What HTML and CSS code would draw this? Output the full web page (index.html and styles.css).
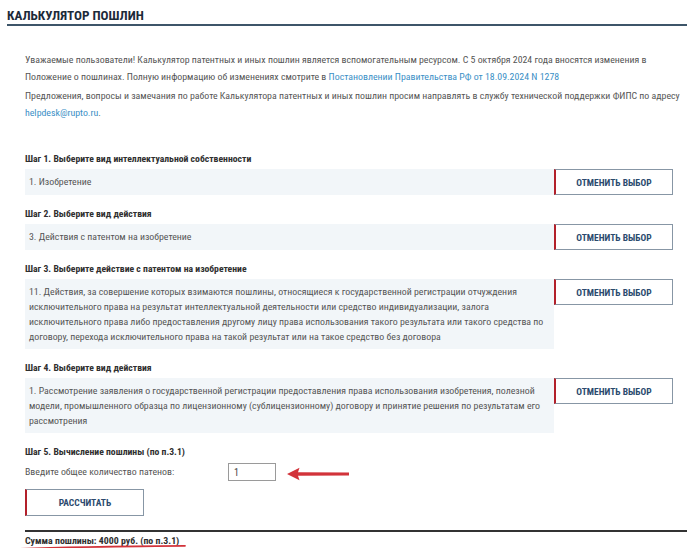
FILE: index.html
```html
<!DOCTYPE html>
<html lang="ru">
<head>
<meta charset="utf-8">
<title>Калькулятор пошлин</title>
<link rel="stylesheet" href="styles.css">
</head>
<body>
<div class="page">
  <h1 class="title">КАЛЬКУЛЯТОР ПОШЛИН</h1>
  <div class="content">
    <p class="intro first">Уважаемые пользователи! Калькулятор патентных и иных пошлин является вспомогательным ресурсом. С 5 октября 2024 года вносятся изменения в<br>Положение о пошлинах. Полную информацию об изменениях смотрите в <a href="#">Постановлении Правительства РФ от 18.09.2024 N 1278</a></p>
    <p class="intro">Предложения, вопросы и замечания по работе Калькулятора патентных и иных пошлин просим направлять в службу технической поддержки ФИПС по адресу<br><a href="#">helpdesk@rupto.ru</a>.</p>

    <div class="steps">
      <div class="step">
        <div class="step-title">Шаг 1. Выберите вид интеллектуальной собственности</div>
        <div class="step-row">
          <div class="choice">1. Изобретение</div>
          <button class="btn">ОТМЕНИТЬ ВЫБОР</button>
        </div>
      </div>
      <div class="step">
        <div class="step-title">Шаг 2. Выберите вид действия</div>
        <div class="step-row">
          <div class="choice">3. Действия с патентом на изобретение</div>
          <button class="btn">ОТМЕНИТЬ ВЫБОР</button>
        </div>
      </div>
      <div class="step">
        <div class="step-title">Шаг 3. Выберите действие с патентом на изобретение</div>
        <div class="step-row">
          <div class="choice">11. Действия, за совершение которых взимаются пошлины, относящиеся к государственной регистрации отчуждения<br>исключительного права на результат интеллектуальной деятельности или средство индивидуализации, залога<br>исключительного права либо предоставления другому лицу права использования такого результата или такого средства по<br>договору, перехода исключительного права на такой результат или на такое средство без договора</div>
          <button class="btn">ОТМЕНИТЬ ВЫБОР</button>
        </div>
      </div>
      <div class="step">
        <div class="step-title">Шаг 4. Выберите вид действия</div>
        <div class="step-row">
          <div class="choice">1. Рассмотрение заявления о государственной регистрации предоставления права использования изобретения, полезной<br>модели, промышленного образца по лицензионному (сублицензионному) договору и принятие решения по результатам его<br>рассмотрения</div>
          <button class="btn">ОТМЕНИТЬ ВЫБОР</button>
        </div>
      </div>
      <div class="step calc">
        <div class="step-title">Шаг 5. Вычисление пошлины (по п.3.1)</div>
        <div class="count-row">
          <label class="count-label" for="cnt">Введите общее количество патенов:</label>
          <input id="cnt" class="count-input" type="text" value="1">
          <svg class="arrow" width="64" height="14" viewBox="0 0 64 14">
            <path d="M1 7 L13.5 0.8 L12 5.2 L63 5.6 L63 8.6 L12 8.8 L13.5 13.2 Z" fill="#d2333a"/>
          </svg>
        </div>
        <button class="btn btn-calc">РАССЧИТАТЬ</button>
      </div>
    </div>

    <div class="result">
      <span class="sum">Сумма пошлины: 4000 руб. (по п.3.1)</span>
      <svg class="scribble" width="168" height="8" viewBox="0 0 168 8">
        <path d="M1 5.8 C40 4.2 110 3.2 166 2.8" stroke="#d2333a" stroke-width="1.8" fill="none" stroke-linecap="round"/>
      </svg>
    </div>
  </div>
</div>
</body>
</html>
```

FILE: styles.css
```css
* { box-sizing: border-box; }
html, body { margin: 0; background: #ffffff; }
body {
  font-family: "Roboto Condensed", Roboto, "Liberation Sans", sans-serif;
  font-size: 9.85px;
  color: #555555;
}
.page {
  padding: 7px 13px 0 7px;
}
.title {
  margin: 0;
  font-size: 13.2px;
  font-weight: 700;
  color: #1c2a39;
  line-height: 17px;
  padding: 0;
  border-bottom: 2px solid #3d5569;
}
.content {
  padding-left: 18px;
}
.intro {
  margin: 2px -10px 0 0;
  line-height: 17px;
}
.intro.first { margin-top: 25px; }
.intro a { color: #3a8fc6; text-decoration: none; }
.steps { margin-top: 30px; }
.step { margin-bottom: 11px; }
.step-title {
  font-weight: 700;
  font-size: 9.7px;
  color: #2f2f2f;
  line-height: 16px;
  margin-bottom: 2px;
}
.step-row {
  display: grid;
  grid-template-columns: 1fr 119px;
  align-items: start;
  padding-right: 14px;
}
.choice {
  background: #f2f6f9;
  line-height: 15px;
  padding: 5px 4px 5px 4px;
  min-height: 26px;
  white-space: nowrap;
  overflow: hidden;
}
.btn {
  height: 26px;
  background: #ffffff;
  border: 1px solid #8796a5;
  border-left: 2px solid #b3202a;
  font-family: "Roboto Condensed", Roboto, "Liberation Sans", sans-serif;
  font-weight: 700;
  font-size: 9.5px;
  color: #2b4a6e;
  padding: 0;
  cursor: pointer;
}
.count-row {
  display: flex;
  align-items: center;
  margin-top: 3px;
}
.count-label {
  width: 203px;
  line-height: 16px;
}
.count-input {
  width: 48px;
  height: 18px;
  border: 1px solid #9a9a9a;
  font-family: "Roboto Condensed", Roboto, "Liberation Sans", sans-serif;
  font-size: 10px;
  color: #444;
  padding: 0 5px;
}
.arrow { margin-left: 10px; margin-top: 3px; display: block; }
.btn-calc {
  display: block;
  width: 119px;
  height: 27px;
  margin-top: 8px;
}
.step.calc { margin-bottom: 14px; }
.result {
  position: relative;
  border-top: 2px solid #333333;
  padding-top: 1px;
  line-height: 15px;
}
.sum {
  font-weight: 700;
  font-size: 9.85px;
  color: #2f2f2f;
}
.scribble {
  position: absolute;
  left: -6px;
  top: 11px;
}
```
